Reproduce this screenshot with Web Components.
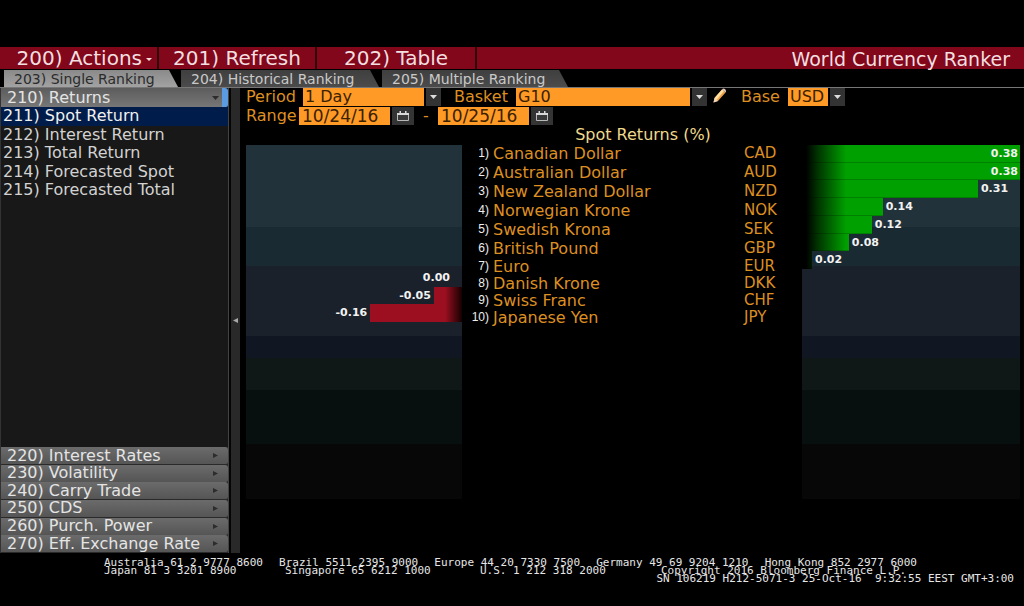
<!DOCTYPE html>
<html lang="en">
<head>
<meta charset="utf-8">
<title>World Currency Ranker</title>
<style>
html,body{margin:0;background:#000;min-height:100%}
body{font-family:"DejaVu Sans",Verdana,sans-serif;font-size:16px;color:#d6d6d6}
</style>
</head>
<body>
<ranker-app></ranker-app>
<script>
const define = (name, build, after) => customElements.define(name, class extends HTMLElement {
  connectedCallback() {
    if (this.shadowRoot) return;
    const root = this.attachShadow({mode: "open"});
    const t = document.createElement("template");
    t.innerHTML = `<style>*{box-sizing:border-box}button,input,select{font:inherit;color:inherit;margin:0;border:0;border-radius:0}</style>` + build(this);
    root.append(t.content.cloneNode(true));
    if (after) after(root, this);
  }
});

define("action-button", el => `<style>
:host{display:block;width:${el.getAttribute("width")}px;border-right:2px solid #30020a}
button{display:flex;align-items:center;justify-content:${el.hasAttribute("menu") ? "flex-end" : "center"};gap:3px;width:100%;height:22px;padding:0 4px;background:none;color:#f3dfe0;font-size:20px;line-height:20px;white-space:nowrap}
svg{margin-top:4px}
</style><button type="button"><slot></slot>${el.hasAttribute("menu") ? '<svg width="8" height="4" viewBox="0 0 8 4"><path d="M1 0h6L4 3z" fill="#f3dfe0"/></svg>' : ""}</button>`);

define("title-bar", () => `<style>
:host{display:flex;height:22px;background:#82071a;color:#f3dfe0}
h1{margin:0 14px 0 auto;font-size:19px;font-weight:400;line-height:24px;white-space:nowrap}
</style><slot></slot><h1>World Currency Ranker</h1>`);

define("rank-tab", el => `<style>
:host{display:block}
button{display:block;height:17px;width:${el.getAttribute("width")}px;padding:0 0 0 10px;text-align:left;font-size:14px;line-height:18px;white-space:nowrap;color:#c9c9c9;background:linear-gradient(#3f3f3f,#4b4b4b);clip-path:polygon(0 0,calc(100% - 9px) 0,100% 100%,0 100%)}
button[aria-selected=true]{color:#2b2b2b;background:linear-gradient(#8a8a8a,#a2a2a2)}
</style><button type="button" role="tab" aria-selected="${el.hasAttribute("selected")}"><slot></slot></button>`);

define("tab-strip", () => `<style>
:host{display:flex;gap:3px;padding:1px 0 0 4px;border-bottom:1px solid #777}
</style><slot></slot>`);

define("nav-group", el => `<style>
:host{display:block}
button{display:flex;align-items:center;justify-content:space-between;width:100%;height:17px;padding:0 9px 0 6px;line-height:16px;text-align:left;white-space:nowrap;color:#e4e4e4;background:linear-gradient(#6b6b6b,#555);border-radius:0 3px 2px 0}
button[aria-expanded=true]{height:19px;border-right:6px solid #5b9be0;padding-right:3px;background:linear-gradient(#5c5c5c,#777)}
</style><button type="button" aria-expanded="${el.hasAttribute("open")}"><slot></slot>
<svg width="7" height="7" viewBox="0 0 7 7"><path d="${el.hasAttribute("open") ? "M0 2h7L3.500 6z" : "M1 1v5L6 3.500z"}" fill="#2c2c2c"/></svg></button>`);

define("nav-link", el => `<style>
:host{display:block}
a{display:block;height:100%;padding-left:2px;line-height:18px;color:#d2d2d2;text-decoration:none;white-space:nowrap}
a[aria-current]{background:#001c4a;color:#f0f0f0}
</style><a href="#" ${el.hasAttribute("current") ? 'aria-current="page"' : ""}><slot></slot></a>`);

define("side-nav", () => `<style>
:host{display:flex;flex-direction:column;background:#181818;border-left:1px solid #333;border-right:1px solid #444}
nav{display:grid;grid-auto-rows:1fr;height:93px}
.groups{display:grid;grid-auto-rows:1fr;height:106px;margin-top:auto;background:#2a2a2a}
</style>
<nav-group open>210) Returns</nav-group>
<nav>
<nav-link current>211) Spot Return</nav-link><nav-link>212) Interest Return</nav-link><nav-link>213) Total Return</nav-link><nav-link>214) Forecasted Spot</nav-link><nav-link>215) Forecasted Total</nav-link>
</nav>
<div class="groups">
<nav-group>220) Interest Rates</nav-group><nav-group>230) Volatility</nav-group><nav-group>240) Carry Trade</nav-group><nav-group>250) CDS</nav-group><nav-group>260) Purch. Power</nav-group><nav-group>270) Eff. Exchange Rate</nav-group>
</div>`);

define("split-handle", () => `<style>
:host{display:flex;align-items:center;justify-content:center;background:#292929;border-left:2px solid #050505}
</style><svg width="5" height="5" viewBox="0 0 5 5"><path d="M5 0v5L0 2.500z" fill="#a8a8a8"/></svg>`);

define("pick-field", el => `<style>
:host{display:flex;align-items:center;height:18px;color:#dd8f20}
label{width:${el.getAttribute("label-width")}px;line-height:18px}
select{appearance:none;width:${el.getAttribute("width")}px;height:18px;padding:0 2px;background:#ff9a26;color:#3a2100;line-height:18px}
span{display:grid;place-items:center;width:15px;height:18px;margin-left:2px;background:#333}
</style><label for="f">${el.getAttribute("label")}</label><select id="f"><option>${el.getAttribute("value")}</option></select>
<span><svg width="7" height="4" viewBox="0 0 7 4"><path d="M0 0h7L3.500 4z" fill="#ddd"/></svg></span>`);

define("date-field", el => `<style>
:host{display:flex;align-items:center;height:18px}
input{width:91px;height:18px;padding:0 3px;background:#ff9a26;color:#3a2100;line-height:18px;font-size:17px}
button{display:grid;place-items:center;width:22px;height:18px;margin-left:2px;padding:0;background:#343434}
</style><input type="text" aria-label="${el.getAttribute("label")}" value="${el.getAttribute("value")}">
<button type="button" aria-label="Open calendar"><svg width="12" height="11" viewBox="0 0 12 11"><path d="M.5 2.500h11v7H.5z" fill="#3a3a3a" stroke="#b8b8b8"/><path d="M0 2h12v2H0zM2.500 0H4v2H2.500zM8 0h1.500v2H8z" fill="#d8d8d8"/></svg></button>`);

define("filter-bar", () => `<style>
:host{display:block;color:#dd8f20}
div{display:flex;height:18px;margin-bottom:1px;line-height:18px}
.basket{margin-left:13px}.edit{width:15px;height:18px;margin-left:5px;padding:0;background:none}.base{margin-left:14px}
.range{width:53px}.dash{width:24px;text-align:center}
</style>
<div><pick-field label="Period" label-width="57" width="121" value="1 Day"></pick-field>
<pick-field class="basket" label="Basket" label-width="62" width="174" value="G10"></pick-field>
<button class="edit" type="button" aria-label="Edit basket"><svg width="15" height="16" viewBox="0 0 15 16"><path d="M1.500 14.500l1-4.500L10 1.500l3.500 3L6 13z" fill="#f0a04a"/><path d="M2.500 10L10 1.500l2 1.500L4.500 12z" fill="#ffdf9e"/><path d="M10 1.500l1-1q3 0 3 3l-.5 1z" fill="#e8c8b8"/><path d="M2.500 10L6 13l-4.500 1.500z" fill="#e8d8c0"/></svg></button>
<pick-field class="base" label="Base" label-width="47" width="40" value="USD"></pick-field></div>
<div><span class="range">Range</span><date-field label="Range start" value="10/24/16"></date-field><span class="dash">-</span><date-field label="Range end" value="10/25/16"></date-field></div>`);

/* bars: comma list of "row:label:percent of the chart width" */
define("bar-chart", el => {
  const left = el.getAttribute("side") === "left";
  const bars = el.getAttribute("bars").split(",").map(b => {
    const [row, label, size] = b.split(":");
    return `<div class="row ${+size > 99 ? "full" : ""}" style="grid-row:${row}"><i style="width:${size}%"></i><b>${label}</b></div>`;
  }).join("");
  return `<style>
:host{display:block;height:354px;background:linear-gradient(#22323a 0 82px,#1a2a32 82px 121px,#1b212b 121px 191px,#101722 191px 213px,#101817 213px 245px,#07100f 245px 299px,#070707 299px)}
.chart{display:grid;grid-template-rows:repeat(10,minmax(0,1fr));height:177px}
.row{display:flex;flex-direction:${left ? "row-reverse" : "row"};min-width:0;position:relative}
i{display:block;flex:none;background:${left ? "linear-gradient(to left,#160000,#9c0f20 17px)" : "linear-gradient(to right,#000 4px,#003500 16px,#00a000 44px)"};${left ? "" : "box-shadow:inset 0 -1px #0003"}}
b{padding:0 3px;font-size:11px;line-height:18px;color:#f2f2f2;white-space:nowrap}
.row:first-child b{${left ? "padding-right:12px" : ""}}
.full b{position:absolute;right:0;padding-right:2px}
</style><div class="chart">${bars}</div>`;
});

define("rank-table", () => {
  const rows = [["Canadian Dollar","CAD"],["Australian Dollar","AUD"],["New Zealand Dollar","NZD"],["Norwegian Krone","NOK"],["Swedish Krona","SEK"],["British Pound","GBP"],["Euro","EUR"],["Danish Krone","DKK"],["Swiss Franc","CHF"],["Japanese Yen","JPY"]];
  return `<style>
:host{display:block}
table{width:100%;border-collapse:collapse;table-layout:fixed}
caption{height:18px;padding-left:22px;line-height:18px;color:#f0d98c;white-space:nowrap}
td,th{padding:0;font-weight:400;text-align:left;white-space:nowrap;height:17px;line-height:17px;color:#dd8f20}
tr:nth-child(-n+6)>*{height:19px;line-height:19px}
td:first-child{width:31px;padding-right:4px;text-align:right;color:#eee;font-family:"Liberation Sans",Arial,sans-serif;font-size:12px}
td:last-child{width:58px;font-size:15px}
</style><table><caption>Spot Returns (%)</caption><tbody>${rows.map((r, i) => `<tr><td>${i + 1})</td><th scope="row">${r[0]}</th><td>${r[1]}</td></tr>`).join("")}</tbody></table>`;
});

define("ranking-view", () => `<style>
:host{display:block;padding:0 4px 54px 6px}
.plot{display:grid;grid-template-columns:216fr 340fr 218fr}
bar-chart{margin-top:19px}
</style>
<filter-bar></filter-bar>
<div class="plot">
<bar-chart side="left" bars="8:0.00:0,9:-0.05:13,10:-0.16:42.500"></bar-chart>
<rank-table></rank-table>
<bar-chart side="right" bars="1:0.38:100,2:0.38:100,3:0.31:80.700,4:0.14:37,5:0.12:32,6:0.08:21.500,7:0.02:4.600"></bar-chart>
</div>`);

define("contact-footer", () => `<style>
:host{display:block;padding:6px 10px 0 104px;font-family:"DejaVu Sans Mono",monospace;font-size:11px;line-height:8px;color:#e6e6e6;white-space:nowrap}
.list{display:flex;justify-content:space-between;margin-right:97px}
.second{display:grid;grid-template-columns:181px 195px 181px 1fr}
p{margin:0;text-align:right;white-space:pre}
</style>
<div class="list"><span>Australia 61 2 9777 8600</span><span>Brazil 5511 2395 9000</span><span>Europe 44 20 7330 7500</span><span>Germany 49 69 9204 1210</span><span>Hong Kong 852 2977 6000</span></div>
<div class="second"><span>Japan 81 3 3201 8900</span><span>Singapore 65 6212 1000</span><span>U.S. 1 212 318 2000</span><span>Copyright 2016 Bloomberg Finance L.P.</span></div>
<p>SN 106219 H212-5071-3 25-Oct-16  9:32:55 EEST GMT+3:00</p>`);

define("ranker-app", () => `<style>
:host{display:block;padding-top:47px}
.work{display:grid;grid-template-columns:229px 11px minmax(0,1fr)}
</style>
<title-bar><action-button width="159" menu>200) Actions</action-button><action-button width="158">201) Refresh</action-button><action-button width="160">202) Table</action-button></title-bar>
<tab-strip role="tablist"><rank-tab width="174" selected>203) Single Ranking</rank-tab><rank-tab width="198">204) Historical Ranking</rank-tab><rank-tab width="186">205) Multiple Ranking</rank-tab></tab-strip>
<div class="work"><side-nav></side-nav><split-handle></split-handle><ranking-view></ranking-view></div>
<contact-footer></contact-footer>`);
</script>
</body>
</html>
